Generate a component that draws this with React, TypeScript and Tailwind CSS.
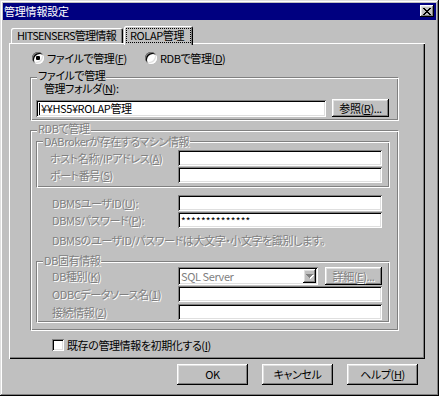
import type { ReactNode } from "react";

const raised =
  "shadow-[inset_-1px_-1px_#000,inset_1px_1px_#fff,inset_-2px_-2px_#808080,inset_2px_2px_#dfdfdf]";
const sunken =
  "shadow-[inset_1px_1px_#808080,inset_-1px_-1px_#fff,inset_2px_2px_#000,inset_-2px_-2px_#dfdfdf]";
const etched =
  "border border-t-[#808080] border-l-[#808080] border-r-white border-b-white shadow-[inset_1px_1px_#fff,inset_-1px_-1px_#808080]";
const dim = "text-[#808080] [text-shadow:1px_1px_0_#fff]";

function M({ c }: { c: string }) {
  return <span className="underline decoration-1 underline-offset-[1px]">{c}</span>;
}

function Field({ className, children }: { className: string; children?: ReactNode }) {
  return (
    <div className={`flex items-center bg-white pl-[3px] ${sunken} ${className}`}>
      {children}
    </div>
  );
}

function Button({
  className,
  disabled,
  children,
}: {
  className: string;
  disabled?: boolean;
  children: ReactNode;
}) {
  return (
    <div
      className={`flex items-center justify-center ${raised} ${disabled ? dim : ""} ${className}`}
    >
      {children}
    </div>
  );
}

function Legend({
  dimmed,
  className,
  children,
}: {
  dimmed?: boolean;
  className: string;
  children: ReactNode;
}) {
  return (
    <div
      className={`ml-[6px] w-fit bg-[#c0c0c0] px-[1px] leading-[13px] ${dimmed ? dim : ""} ${className}`}
    >
      {children}
    </div>
  );
}

function Radio({ checked }: { checked?: boolean }) {
  return (
    <div
      className={`flex h-[12px] w-[12px] shrink-0 items-center justify-center rounded-full bg-white ${sunken}`}
    >
      {checked && <div className="h-[4px] w-[4px] rounded-[1px] bg-black" />}
    </div>
  );
}

function CloseGlyph() {
  const cells = [
    [0, 0], [1, 0], [6, 0], [7, 0],
    [1, 1], [2, 1], [5, 1], [6, 1],
    [2, 2], [3, 2], [4, 2], [5, 2],
    [3, 3], [4, 3],
    [2, 4], [3, 4], [4, 4], [5, 4],
    [1, 5], [2, 5], [5, 5], [6, 5],
    [0, 6], [1, 6], [6, 6], [7, 6],
  ];
  return (
    <svg width="8" height="7" viewBox="0 0 8 7" shapeRendering="crispEdges">
      {cells.map(([x, y]) => (
        <rect key={`${x}-${y}`} x={x} y={y} width="1" height="1" fill="#000" />
      ))}
    </svg>
  );
}

function DownArrow() {
  return (
    <svg width="8" height="5" viewBox="0 0 8 5" shapeRendering="crispEdges">
      <g fill="#fff" transform="translate(1 1)">
        <rect x="0" y="0" width="7" height="1" />
        <rect x="1" y="1" width="5" height="1" />
        <rect x="2" y="2" width="3" height="1" />
        <rect x="3" y="3" width="1" height="1" />
      </g>
      <g fill="#808080">
        <rect x="0" y="0" width="7" height="1" />
        <rect x="1" y="1" width="5" height="1" />
        <rect x="2" y="2" width="3" height="1" />
        <rect x="3" y="3" width="1" height="1" />
      </g>
    </svg>
  );
}

export default function App() {
  return (
    <div
      className={`h-[396px] w-[439px] overflow-hidden whitespace-nowrap bg-[#c0c0c0] p-[3px] text-[11px] leading-[13px] tracking-[-0.4px] text-black font-['Noto_Sans_CJK_JP','Noto_Sans',sans-serif] [font-feature-settings:'palt'] shadow-[inset_-1px_-1px_#000,inset_1px_1px_#dfdfdf,inset_-2px_-2px_#808080,inset_2px_2px_#fff]`}
    >
      {/* title bar */}
      <div className="flex h-[17px] items-start justify-between bg-[#000080] pr-[2px] pl-[1px]">
        <span className="mt-[2px] tracking-[-0.2px] text-white">管理情報設定</span>
        <div className={`mt-[2px] flex h-[12px] w-[14px] items-center justify-center bg-[#c0c0c0] ${raised}`}>
          <CloseGlyph />
        </div>
      </div>

      <div className="ml-[6px]">
        {/* tabs */}
        <div className="mt-[6px] flex h-[17px] items-end pl-[2px]">
          <div className="flex h-[15px] w-[112px] items-center rounded-t-[2px] pl-[6px] tracking-[-0.7px] shadow-[inset_1px_1px_#fff,inset_-1px_0_#000,inset_-2px_0_#808080]">
            HITSENSERS管理情報
          </div>
          <div className="relative z-10 -mb-[2px] ml-[1px] flex h-[19px] w-[69px] items-start rounded-t-[2px] bg-[#c0c0c0] shadow-[inset_1px_1px_#fff,inset_-1px_0_#000,inset_-2px_0_#808080]">
            <span className="mt-[2px] ml-[2px] flex h-[15px] w-[65px] items-center border border-dotted border-black pl-[3px]">
              ROLAP管理
            </span>
          </div>
        </div>

        {/* tab panel */}
        <div className="flex h-[316px] w-[416px] flex-col shadow-[inset_1px_1px_#fff,inset_-1px_-1px_#000,inset_-2px_-2px_#808080]">
          <div className="mt-[9px] ml-[23px] flex h-[12px] items-center">
            <div className="flex w-[113px] items-center gap-[3px]">
              <Radio checked />
              <span>
                ファイルで管理(<M c="F" />)
              </span>
            </div>
            <div className="flex items-center gap-[3px]">
              <Radio />
              <span>
                RDBで管理(<M c="D" />)
              </span>
            </div>
          </div>

          {/* file group */}
          <div className={`mt-[13px] ml-[21px] h-[44px] w-[369px] ${etched}`}>
            <Legend className="-mt-[9px]">ファイルで管理</Legend>
            <div className="ml-[13px]">
              管理フォルダ(<M c="N" />):
            </div>
            <div className="mt-[4px] ml-[5px] flex items-start">
              <Field className="mt-[1px] h-[17px] w-[290px]">
                <span className="mr-[1px] h-[12px] w-[1px] bg-black" />
                ¥¥HS5¥ROLAP管理
              </Field>
              <Button className="ml-[6px] h-[18px] w-[57px]">
                参照(<M c="R" />)...
              </Button>
            </div>
          </div>

          {/* rdb group */}
          <div className={`mt-[9px] ml-[21px] h-[201px] w-[369px] ${etched}`}>
            <Legend dimmed className="-mt-[9px]">RDBで管理</Legend>

            <div className={`mt-[6px] ml-[5px] h-[47px] w-[354px] ${etched}`}>
              <Legend dimmed className="-mt-[7px]">DABrokerが存在するマシン情報</Legend>
              <div className="mt-[2px] flex h-[16px] items-center">
                <span className={`ml-[13px] w-[128px] ${dim}`}>
                  ホスト名称/IPアドレス(<M c="A" />)
                </span>
                <Field className="h-[16px] w-[204px]" />
              </div>
              <div className="mt-[1px] flex h-[16px] items-center">
                <span className={`ml-[13px] w-[128px] ${dim}`}>
                  ポート番号(<M c="S" />)
                </span>
                <Field className="h-[16px] w-[204px]" />
              </div>
            </div>

            <div className="mt-[7px] flex h-[16px] items-center">
              <span className={`ml-[21px] w-[126px] ${dim}`}>
                DBMSユーザID(<M c="U" />):
              </span>
              <Field className="h-[16px] w-[204px]" />
            </div>
            <div className="mt-[1px] flex h-[16px] items-center">
              <span className={`ml-[21px] w-[126px] ${dim}`}>
                DBMSパスワード(<M c="P" />):
              </span>
              <Field className="h-[16px] w-[204px]">
                <span className="text-[10px] tracking-[0.3px]">**************</span>
              </Field>
            </div>
            <div className={`mt-[6px] ml-[21px] ${dim}`}>
              DBMSのユーザID/パスワードは大文字・小文字を識別します。
            </div>

            <div className={`mt-[14px] ml-[5px] h-[62px] w-[354px] ${etched}`}>
              <Legend dimmed className="-mt-[8px]">DB固有情報</Legend>
              <div className="flex h-[18px] items-center">
                <span className={`ml-[15px] w-[126px] ${dim}`}>
                  DB種別(<M c="K" />)
                </span>
                <div className={`flex h-[18px] w-[140px] items-center justify-between bg-white p-[2px] ${sunken}`}>
                  <span className="pl-[1px] text-[#808080]">SQL Server</span>
                  <div className={`flex h-[14px] w-[13px] items-center justify-center bg-[#c0c0c0] ${raised}`}>
                    <DownArrow />
                  </div>
                </div>
                <Button disabled className="ml-[7px] h-[18px] w-[57px]">
                  詳細(<M c="E" />)...
                </Button>
              </div>
              <div className="mt-[1px] flex h-[16px] items-center">
                <span className={`ml-[15px] w-[126px] ${dim}`}>
                  ODBCデータソース名(<M c="1" />)
                </span>
                <Field className="h-[16px] w-[204px]" />
              </div>
              <div className="mt-[2px] flex h-[16px] items-center">
                <span className={`ml-[15px] w-[126px] ${dim}`}>
                  接続情報(<M c="2" />)
                </span>
                <Field className="h-[16px] w-[204px]" />
              </div>
            </div>
          </div>

          {/* reset checkbox */}
          <div className="mt-[8px] ml-[43px] flex h-[12px] items-center gap-[3px]">
            <div className={`h-[12px] w-[12px] bg-white ${sunken}`} />
            <span>
              既存の管理情報を初期化する(<M c="I" />)
            </span>
          </div>
        </div>

        {/* dialog buttons */}
        <div className="mt-[5px] ml-[168px] flex gap-[14px]">
          <Button className="h-[21px] w-[71px]">OK</Button>
          <Button className="h-[21px] w-[71px]">キャンセル</Button>
          <Button className="h-[21px] w-[71px]">
            ヘルプ(<M c="H" />)
          </Button>
        </div>
      </div>
    </div>
  );
}
